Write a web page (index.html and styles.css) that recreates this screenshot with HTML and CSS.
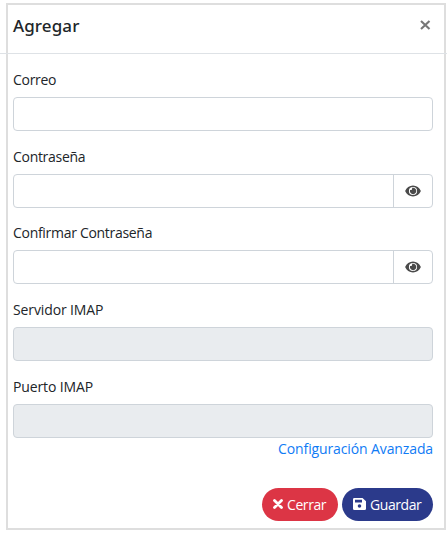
FILE: index.html
```html
<!DOCTYPE html>
<html lang="es">
<head>
<meta charset="utf-8">
<title>Agregar</title>
<link rel="stylesheet" href="styles.css">
</head>
<body>
<svg class="defs" width="0" height="0">
  <symbol id="eye" viewBox="0 0 16 12">
    <path fill="currentColor" fill-rule="evenodd" d="M8 .5C4.400.500 1.500 2.700.1 6c1.400 3.300 4.300 5.500 7.900 5.500s6.500-2.200 7.900-5.500C14.500 2.700 11.600.5 8 .5ZM8 1.900a4.100 4.100 0 1 1 0 8.200a4.100 4.100 0 0 1 0-8.200ZM8 2.800c-.4 0-.7.1-1 .2a1.400 1.400 0 0 1-1.900 1.900A3.200 3.200 0 1 0 8 2.800Z"/>
  </symbol>
</svg>
<main class="modal">
  <header class="modal-header">
    <h1 class="title">Agregar</h1>
    <button class="close" aria-label="Cerrar"><svg width="11" height="10" viewBox="0 0 11 10"><path d="M1 1 9.500 9M9.500 1 1 9" stroke="currentColor" stroke-width="2.100"/></svg></button>
  </header>
  <form class="modal-body">
    <div class="group"><label for="correo">Correo</label><div class="field"><input id="correo"></div></div>
    <div class="group"><label for="clave">Contraseña</label><div class="field"><input id="clave" type="password"><button type="button" class="reveal"><svg width="16" height="12"><use href="#eye"/></svg></button></div></div>
    <div class="group"><label for="confirmar">Confirmar Contraseña</label><div class="field"><input id="confirmar" type="password"><button type="button" class="reveal"><svg width="16" height="12"><use href="#eye"/></svg></button></div></div>
    <div class="group server"><label for="servidor">Servidor IMAP</label><div class="field disabled"><input id="servidor" disabled></div></div>
    <div class="group server last"><label for="puerto">Puerto IMAP</label><div class="field disabled"><input id="puerto" disabled></div></div>
    <a class="advanced">Configuración Avanzada</a>
  </form>
  <footer class="modal-footer">
    <button class="btn danger"><svg width="10" height="10" viewBox="0 0 10 10"><path d="M1.500 1.500 8.500 8.500M8.500 1.500 1.500 8.500" stroke="currentColor" stroke-width="2.800" stroke-linecap="round"/></svg><span>Cerrar</span></button>
    <button class="btn primary"><svg width="13" height="12" viewBox="0 0 13 12"><path fill="currentColor" fill-rule="evenodd" d="M1.400 0H9.500L13 3.300V10.700Q13 12 11.600 12H1.400Q0 12 0 10.700V1.300Q0 0 1.400 0ZM2 1.700V4.500H9V1.700ZM6.500 6.200a1.800 1.800 0 1 0 0 3.600a1.800 1.800 0 0 0 0-3.600Z"/></svg><span>Guardar</span></button>
  </footer>
</main>
</body>
</html>
```
FILE: styles.css
```css
* { box-sizing: border-box; }
body {
  margin: 0;
  padding: 3px 1px 0 6px;
  height: 534px;
  overflow: hidden;
  background: #fff;
  color: #212529;
  font: 14px/21px "Open Sans", "Noto Sans", sans-serif;
}
.defs { position: absolute; }
button { font: inherit; border: 0; background: none; padding: 0; }
svg { display: block; flex: none; }
.modal {
  height: 527px;
  border: 2px solid #dedede;
}
.modal-header {
  display: flex;
  justify-content: space-between;
  height: 49px;
  margin: 0 -3px 0 -8px;
  padding: 9px 16px 0 13px;
  border-bottom: 1px solid #dee2e6;
}
.title {
  margin: 0;
  font-family: "Noto Sans", sans-serif;
  font-size: 17px;
  line-height: 24px;
  font-weight: 500;
  letter-spacing: .1px;
}
.close { height: 10px; margin-top: 6px; color: #777; }
.modal-body {
  display: flex;
  flex-direction: column;
  padding: 15px 11px 0 5px;
}
.group { height: 76.7px; }
.group.last { height: 62px; }
label { display: block; height: 28px; letter-spacing: -.3px; }
.server label { letter-spacing: -.12px; }
label, .advanced, .btn span { white-space: nowrap; }
.field {
  display: flex;
  height: 34px;
  border: 1px solid #ced4da;
  border-radius: 4px;
  overflow: hidden;
}
.field input {
  flex: 1;
  min-width: 0;
  border: 0;
  padding: 0 12px;
  background: transparent;
  outline: 0;
}
.disabled { background: #e9ecef; }
.reveal {
  display: flex;
  align-items: center;
  justify-content: center;
  width: 39px;
  border-left: 1px solid #ced4da;
  color: #4b4b4b;
}
.advanced { align-self: flex-end; color: #107bf5; letter-spacing: -.12px; }
.modal-footer {
  display: flex;
  justify-content: flex-end;
  gap: 4px;
  margin-top: 29px;
  padding-right: 11px;
}
.btn {
  display: flex;
  align-items: center;
  height: 33px;
  padding-left: 11px;
  border-radius: 17px;
  color: #fff;
  letter-spacing: -.42px;
}
.danger { width: 76px; gap: 4px; background: #dc3545; }
.primary { width: 91px; gap: 4px; background: #2b3a8b; }
```
